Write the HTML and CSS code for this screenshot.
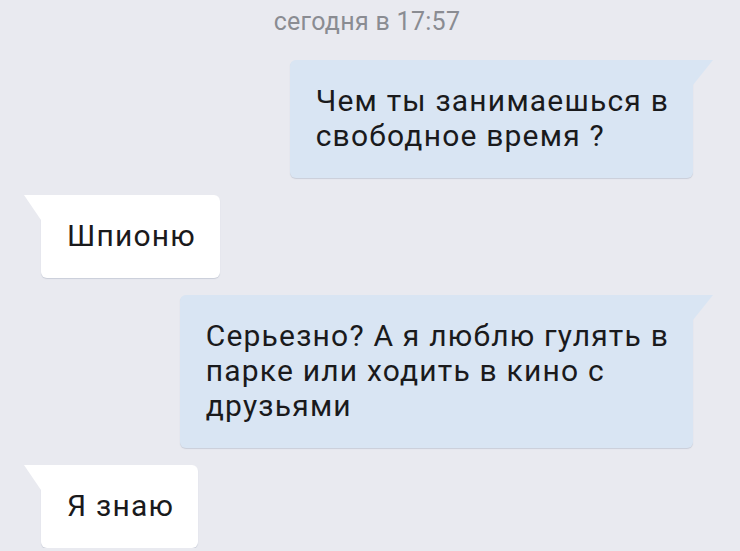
FILE: index.html
```html
<!DOCTYPE html>
<html lang="ru">
<head>
  <meta charset="UTF-8">
  <title>Сообщения</title>
  <link rel="stylesheet" href="styles.css">
</head>
<body>

<div class="chat">
  <div class="chat-date">сегодня в 17:57</div>

  <div class="msg msg-out">Чем ты занимаешься в<br>свободное время ?</div>
  <div class="msg msg-in">Шпионю</div>
  <div class="msg msg-out">Серьезно? А я люблю гулять в<br>парке или ходить в кино с<br>друзьями</div>
  <div class="msg msg-in">Я знаю</div>
</div>

</body>
</html>
```

FILE: styles.css
```css
body {
  margin: 0;
  background-color: #e9eaf0;
  font-family: Roboto, "Noto Sans", "Liberation Sans", sans-serif;
}

.chat {
  display: flex;
  flex-direction: column;
  gap: 17px;
  padding: 10px 47px 0 41px;
}

.chat-date {
  text-align: center;
  font-size: 25px;
  line-height: 24px;
  letter-spacing: 0.3px;
  color: #8a8c92;
  margin-bottom: 9px;
}

.msg {
  position: relative;
  width: fit-content;
  padding: 23px 24px 25px 26px;
  font-size: 30px;
  line-height: 35px;
  letter-spacing: 1.2px;
  color: #1a1a1c;
  border-radius: 6px;
  box-shadow: 0 1px 1px rgba(60, 80, 110, 0.18);
}

.msg-out {
  align-self: flex-end;
  background-color: #d9e5f3;
  border-top-right-radius: 0;
}

.msg-out::after {
  content: "";
  position: absolute;
  top: 0;
  right: -20px;
  width: 20px;
  height: 25px;
  background-color: #d9e5f3;
  clip-path: polygon(0 0, 100% 0, 0 100%);
}

.msg-in {
  align-self: flex-start;
  background-color: #ffffff;
  border-top-left-radius: 0;
}

.msg-in::before {
  content: "";
  position: absolute;
  top: 0;
  left: -17px;
  width: 17px;
  height: 25px;
  background-color: #ffffff;
  clip-path: polygon(0 0, 100% 0, 100% 100%);
}
```
